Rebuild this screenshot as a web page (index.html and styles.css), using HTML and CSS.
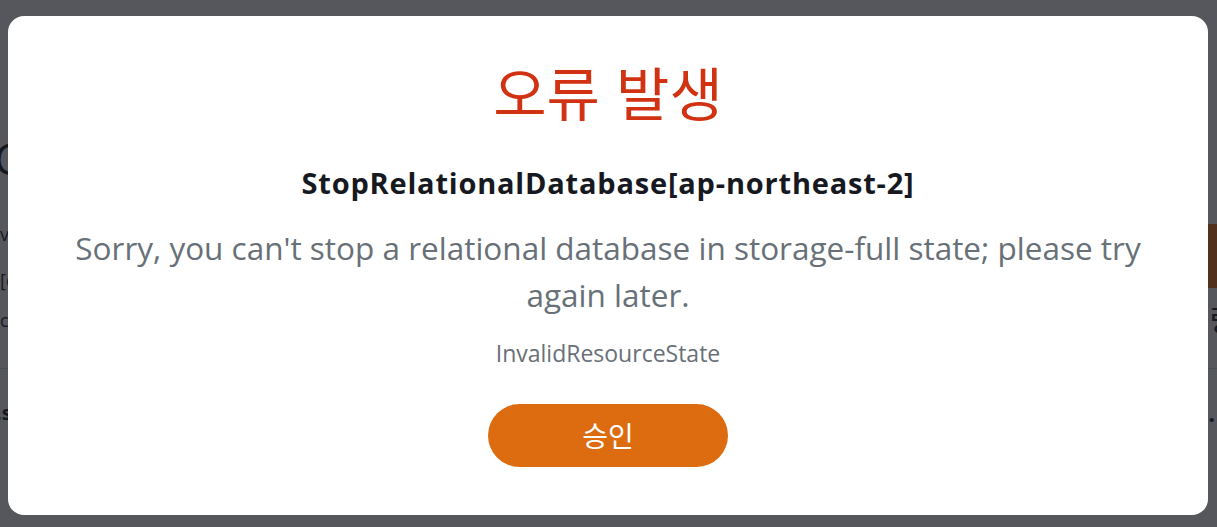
FILE: index.html
```html
<!DOCTYPE html>
<html lang="ko">
<head>
<meta charset="utf-8">
<title>오류 발생</title>
<link rel="stylesheet" href="styles.css">
</head>
<body>
<div class="page">
  <div class="page-top">
    <div class="col-left">
      <span class="bg-big">Co</span>
      <span class="bg-text bg-v">vi</span>
      <span class="bg-text bg-b">[d</span>
      <span class="bg-text bg-c">cr</span>
    </div>
    <div class="col-right">
      <span class="bg-btn"></span>
      <span class="bg-kr">량</span>
    </div>
  </div>
  <div class="bg-rule"></div>
  <div class="page-bottom"><span class="bg-bold">.s</span><span class="bg-dot">.</span></div>
</div>
<div class="overlay"></div>
<div class="modal" role="dialog">
  <h1 class="modal-title">오류 발생</h1>
  <h2 class="modal-op">StopRelationalDatabase[ap-northeast-2]</h2>
  <p class="modal-msg">Sorry, you can't stop a relational database in storage-full state; please try again later.</p>
  <p class="modal-code">InvalidResourceState</p>
  <button class="modal-btn" type="button">승인</button>
</div>
</body>
</html>
```
FILE: styles.css
```css
html, body {
  margin: 0;
  padding: 0;
}
body {
  width: 1217px;
  height: 527px;
  overflow: hidden;
  background: #ffffff;
  font-family: "Open Sans", "Noto Sans CJK KR", sans-serif;
  color: #16191f;
}
.page {
  display: flex;
  flex-direction: column;
}
.page-top {
  height: 368px;
  display: flex;
  justify-content: space-between;
}
.col-left {
  display: flex;
  flex-direction: column;
  align-items: flex-start;
  padding-top: 138px;
}
.bg-big {
  font-size: 44px;
  line-height: 40px;
  margin-left: -6px;
}
.bg-text {
  font-size: 18px;
  line-height: 24px;
}
.bg-v { margin-top: 44px; }
.bg-b { margin-top: 22px; }
.bg-c { margin-top: 16px; }
.col-right {
  display: flex;
  flex-direction: column;
  align-items: flex-end;
  padding-top: 224px;
}
.bg-btn {
  display: block;
  width: 120px;
  height: 64px;
  background: #ec7211;
  margin-right: -111px;
}
.bg-kr {
  font-size: 30px;
  line-height: 36px;
  margin-top: 14px;
  margin-right: -20px;
}
.bg-rule {
  height: 1px;
  background: #d5dbdb;
}
.page-bottom {
  display: flex;
  justify-content: space-between;
  padding-top: 30px;
  line-height: 28px;
}
.bg-bold {
  font-size: 20px;
  font-weight: 700;
  margin-left: -4px;
}
.bg-dot {
  font-size: 24px;
  font-weight: 700;
  margin-right: 2px;
}
.overlay {
  position: fixed;
  inset: 0;
  background: rgba(22, 25, 31, 0.73);
}
.modal {
  position: fixed;
  left: 8px;
  top: 16px;
  width: 1200px;
  height: 499px;
  box-sizing: border-box;
  background: #ffffff;
  border-radius: 16px;
  display: flex;
  flex-direction: column;
  align-items: center;
  text-align: center;
  padding: 39px 50px 0;
}
.modal-title {
  margin: 0;
  font-family: "Noto Sans CJK KR", sans-serif;
  font-weight: 400;
  font-size: 58px;
  line-height: 72px;
  color: #d13212;
}
.modal-op {
  margin: 38px 0 0;
  font-size: 29px;
  font-weight: 700;
  letter-spacing: 0.8px;
  line-height: 36px;
  color: #16191f;
}
.modal-msg {
  margin: 23px 0 0;
  font-size: 31.5px;
  line-height: 47px;
  color: #687078;
}
.modal-code {
  margin: 20px 0 0;
  font-size: 23px;
  line-height: 30px;
  color: #687078;
}
.modal-btn {
  margin-top: 36px;
  width: 240px;
  height: 63px;
  flex-shrink: 0;
  border: none;
  border-radius: 32px;
  background: #dd6b10;
  color: #ffffff;
  font-family: "Noto Sans CJK KR", sans-serif;
  font-size: 28px;
  line-height: 63px;
  padding: 0 0 2px;
}
```
